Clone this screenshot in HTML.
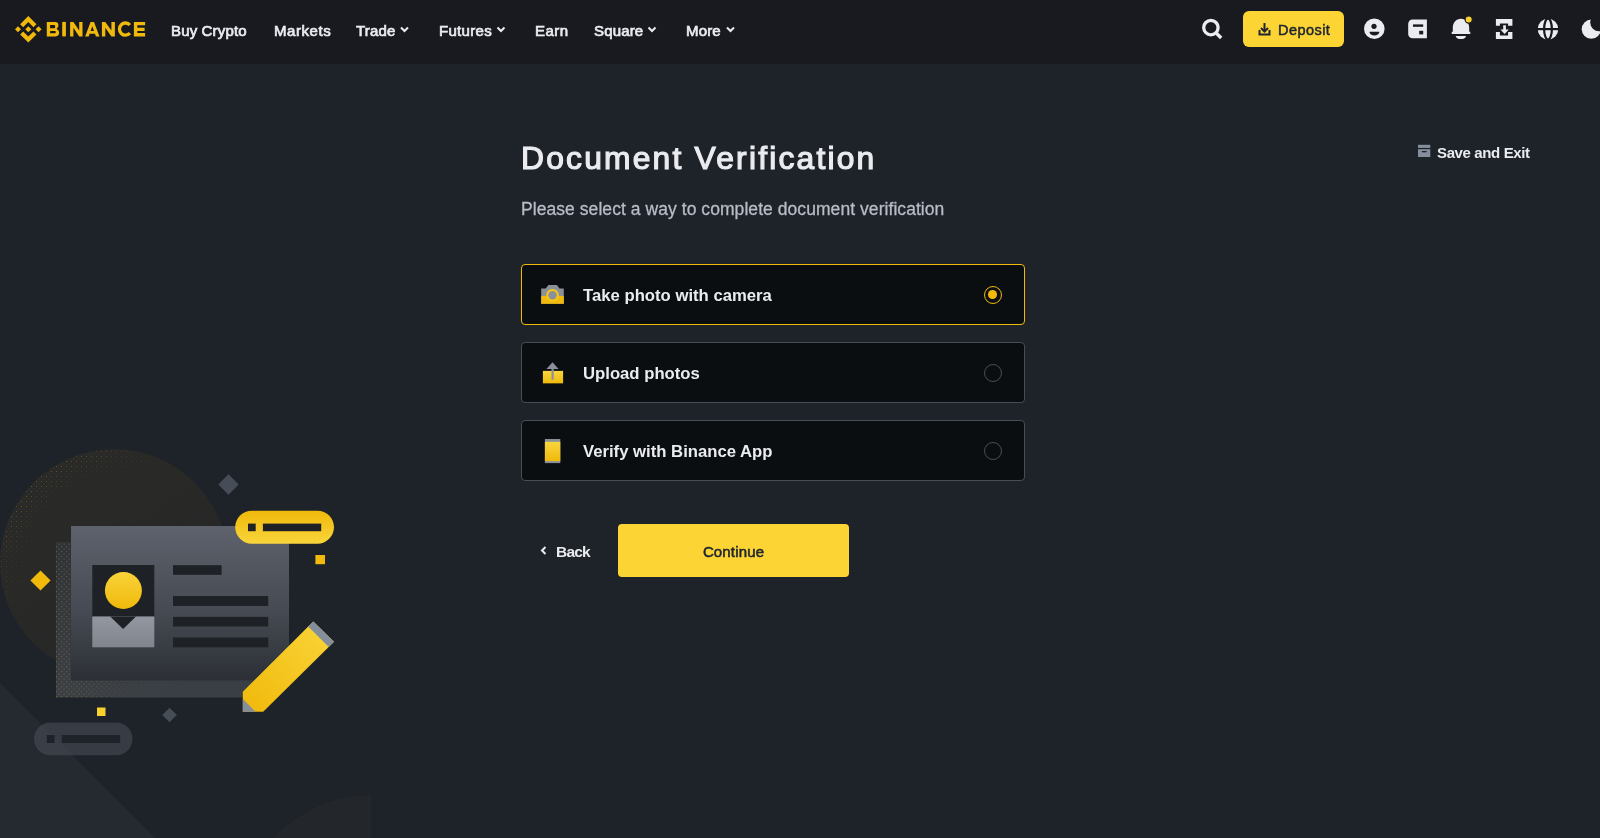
<!DOCTYPE html>
<html>
<head>
<meta charset="utf-8">
<style>
html,body{margin:0;padding:0;}
.abs,.nav,.ctext{will-change:transform;}
body{width:1600px;height:838px;overflow:hidden;background:#1E2229;font-family:"Liberation Sans",sans-serif;position:relative;}
.abs{position:absolute;white-space:nowrap;line-height:1;}
#hdr{position:absolute;left:0;top:0;width:1600px;height:64px;background:#181A20;}
.nav{position:absolute;top:22.9px;font-size:15px;font-weight:400;color:#EAECEF;-webkit-text-stroke:0.7px #EAECEF;letter-spacing:0.15px;line-height:1;white-space:nowrap;}
.card{position:absolute;left:521px;width:504px;height:61px;box-sizing:border-box;border:1px solid #474D57;border-radius:4px;background:#0B0E11;}
.card.sel{border-color:#F0B90B;}
.ctext{position:absolute;left:61.3px;top:22.8px;font-size:16.7px;font-weight:700;color:#EAECEF;line-height:1;white-space:nowrap;}
.radio{position:absolute;left:461.5px;top:20.5px;width:18px;height:18px;box-sizing:border-box;border:1.3px solid #474D57;border-radius:50%;}
.sel .radio{border-color:#F0B90B;}
.sel .radio:after{content:"";position:absolute;left:3.35px;top:3.35px;width:8.7px;height:8.7px;border-radius:50%;background:#F0B90B;}
svg{position:absolute;overflow:visible;}
</style>
</head>
<body>
<div id="hdr"></div>

<!-- logo -->
<svg style="left:15px;top:15.8px" width="26.6" height="26.6" viewBox="0 0 126.61 126.61"><g fill="#F0B90B"><path d="M38.73 53.2l24.59-24.58 24.6 24.6 14.3-14.31L63.32 0 24.42 38.9l14.31 14.3z"/><path d="M0 63.31l14.3-14.31 14.31 14.31-14.31 14.3z"/><path d="M38.73 73.41l24.59 24.59 24.6-24.6 14.31 14.29-38.9 38.91-38.91-38.88-.02-.02 14.33-14.29z"/><path d="M98 63.31l14.3-14.31 14.31 14.3-14.31 14.32z"/><path d="M77.83 63.3L63.32 48.78 52.59 59.51l-1.24 1.23-2.54 2.54-.02.02.02.03 14.51 14.5 14.51-14.52.01-.01-.01-.01z"/></g></svg>
<svg style="left:0;top:0" width="160" height="64"><g fill="#F0B90B" fill-rule="evenodd">
<path d="M46.8 21.9H55.3Q58.4 21.9 58.4 25.2Q58.4 27.6 56.6 28.9Q59.1 29.8 59.1 32.6Q59.1 36.4 55.6 36.4H46.8ZM50.1 25H54.4Q55.2 25 55.2 26.6Q55.2 28.2 54.4 28.2H50.1ZM50.1 31.1H54.9Q55.8 31.1 55.8 32.2Q55.8 33.3 54.9 33.3H50.1Z"/>
<path d="M62.2 21.9H65.9V36.4H62.2Z"/>
<path d="M70.1 21.9H73.4L79.2 30.6V21.9H82.5V36.4H79.2L73.4 27.7V36.4H70.1Z"/>
<path d="M85.1 36.4L90.6 21.9H94L99.5 36.4H95.9L95 33.8H89.6L88.7 36.4ZM90.6 30.9H94L92.3 26.2Z"/>
<path d="M101.9 21.9H105.3L111.4 30.6V21.9H114.9V36.4H111.4L105.3 27.7V36.4H101.9Z"/>
<path d="M133.9 21.9H145.1V25.2H137.3V27.75H144.6V30.9H137.3V33.1H145.1V36.4H133.9Z"/>
</g>
<path d="M129.9 25A6 6.1 0 1 0 129.9 33.2" fill="none" stroke="#F0B90B" stroke-width="3.3"/>
</svg>

<div class="nav" style="left:171px">Buy Crypto</div>
<div class="nav" style="left:273.5px;letter-spacing:0.55px">Markets</div>
<div class="nav" style="left:356px">Trade</div>
<div class="nav" style="left:438.5px;letter-spacing:0.3px">Futures</div>
<div class="nav" style="left:535px;letter-spacing:0.45px">Earn</div>
<div class="nav" style="left:594px">Square</div>
<div class="nav" style="left:685.5px">More</div>

<!-- chevrons -->
<svg style="left:0;top:0" width="1600" height="64">
<g fill="none" stroke="#EAECEF" stroke-width="2">
<path d="M401 27.5l3.5 3.5 3.5-3.5"/>
<path d="M497.5 27.5l3.5 3.5 3.5-3.5"/>
<path d="M648.5 27.5l3.5 3.5 3.5-3.5"/>
<path d="M727 27.5l3.5 3.5 3.5-3.5"/>
</g>
</svg>

<!-- search -->
<svg style="left:0;top:0" width="1600" height="64">
<g fill="none" stroke="#EAECEF" stroke-width="3.3">
<circle cx="1210.9" cy="27.6" r="7.2"/>
<path d="M1216.2 33l5 5"/>
</g>
</svg>

<!-- deposit -->
<div style="position:absolute;left:1243px;top:11px;width:101px;height:36px;border-radius:6px;background:#FCD535;"></div>
<svg style="left:0;top:0" width="1600" height="64">
<g fill="none" stroke="#202630" stroke-width="2">
<path d="M1264.5 23v8"/>
<path d="M1261 28l3.5 3.5 3.5-3.5"/>
<path d="M1259.5 30v4.5h10v-4.5"/>
</g>
</svg>
<div class="abs" style="left:1278px;top:23.2px;font-size:14.5px;font-weight:400;color:#202630;-webkit-text-stroke:0.5px #202630;letter-spacing:0.45px;">Deposit</div>

<!-- header right icons -->
<svg style="left:0;top:0" width="1600" height="64">
<g fill="#EAECEF">
<!-- user -->
<circle cx="1374.3" cy="28.8" r="10.3"/>
<!-- wallet -->
<path d="M1412.5 19.6h14.4v18.7h-14.4a4.3 4.3 0 0 1-4.3-4.3v-10.1a4.3 4.3 0 0 1 4.3-4.3z"/>
<!-- bell -->
<path d="M1461 18.8c-5 0-8.2 4-8.2 9v4h-1.1v2.2h18.6v-2.2h-1.1v-4c0-5-3.2-9-8.2-9z"/>
<path d="M1455.7 35.9h10.3c0 2-2.3 3.2-5.15 3.2s-5.15-1.2-5.15-3.2z"/>
<!-- transfer -->
<path d="M1495.9 19H1512.4V25.8H1508.1V23.5H1499.9V25.8H1495.9Z"/>
<path d="M1495.9 38.9H1512.4V32.1H1508.1V35.5H1499.9V32.1H1495.9Z"/>
<path d="M1503.2 25.3H1505.9V29.4H1508.8L1504.6 33.9L1500.4 29.4H1503.2Z"/>
<!-- globe -->
<circle cx="1548" cy="29.1" r="10.3"/>
<!-- moon -->
<circle cx="1591.3" cy="29.2" r="9.6"/>
</g>
<g fill="#181A20">
<circle cx="1374" cy="26.3" r="2.6"/>
<path d="M1369.6 31.8h9.6v0.5c0 1.8-2.2 3.2-4.8 3.2s-4.8-1.4-4.8-3.2z"/>
<rect x="1413" y="24.4" width="10.2" height="2.4"/>
<rect x="1419.2" y="30.8" width="4" height="3.6"/>
</g>
<g fill="none" stroke="#181A20" stroke-width="2.2">
<path d="M1537 29.1h22"/>
<ellipse cx="1548" cy="29.1" rx="3.9" ry="10.4"/>
</g>
<circle cx="1599.2" cy="22.3" r="9" fill="#181A20"/>
<circle cx="1468.7" cy="19.6" r="3.6" fill="#F8D12F" stroke="#181A20" stroke-width="1.2"/>
</svg>

<!-- main -->
<div class="abs" style="left:521px;top:142.8px;font-size:31.8px;font-weight:400;color:#EAECEF;-webkit-text-stroke:1.2px #EAECEF;letter-spacing:2.2px;">Document Verification</div>
<div class="abs" style="left:520.5px;top:200.6px;font-size:17.5px;font-weight:400;color:#B7BDC6;-webkit-text-stroke:0.3px #B7BDC6;letter-spacing:0.06px;">Please select a way to complete document verification</div>

<!-- save and exit -->
<svg style="left:0;top:130px" width="1600" height="40">
<g fill="#848E9C">
<rect x="1418" y="14.8" width="12.3" height="3.1"/>
<path d="M1418 19.2h12.3v7.8h-12.3z"/>
</g>
<rect x="1421.8" y="21" width="4.8" height="1.3" fill="#1E2229"/>
</svg>
<div class="abs" style="left:1436.5px;top:144.5px;font-size:15px;font-weight:700;color:#EAECEF;letter-spacing:-0.375px;">Save and Exit</div>

<!-- cards -->
<div class="card sel" style="top:264px">
  <svg style="left:-1px;top:-1px" width="60" height="61">
    <defs><linearGradient id="gIc" x1="0" y1="0" x2="0" y2="1"><stop offset="0" stop-color="#F9D53E"/><stop offset="1" stop-color="#F0B90B"/></linearGradient></defs>
    <path d="M20.2 24.6h4.5l2.8-3.6h8.4l2.6 3.6h4.3v15.2H20.2z" fill="#8A9099"/>
    <rect x="20.2" y="31.9" width="22.6" height="7.9" fill="#F0B90B"/>
    <circle cx="31.5" cy="31.3" r="6.3" fill="#F5C518"/>
    <circle cx="31.5" cy="31.3" r="4.2" fill="#8A9099"/>
  </svg>
  <div class="ctext">Take photo with camera</div>
  <div class="radio"></div>
</div>
<div class="card" style="top:342px">
  <svg style="left:-1px;top:-1px" width="60" height="61">
    <rect x="21.9" y="28.9" width="20.2" height="12.45" fill="url(#gIc)"/>
    <path d="M31.5 20.3l6.1 6.7h-4.9v10.7h-2.2v-10.7h-5.1z" fill="#8A9099"/>
  </svg>
  <div class="ctext">Upload photos</div>
  <div class="radio"></div>
</div>
<div class="card" style="top:420px">
  <svg style="left:-1px;top:-1px" width="60" height="61">
    <rect x="23.9" y="19" width="15.4" height="24.1" fill="#8A9099"/>
    <rect x="23.9" y="21.8" width="15.4" height="19.3" fill="url(#gIc)"/>
  </svg>
  <div class="ctext">Verify with Binance App</div>
  <div class="radio"></div>
</div>

<!-- back / continue -->
<svg style="left:0;top:540px" width="1600" height="20">
<path d="M545.5 7l-3.5 3.5 3.5 3.5" fill="none" stroke="#EAECEF" stroke-width="2"/>
</svg>
<div class="abs" style="left:556px;top:544.2px;font-size:15.5px;font-weight:700;color:#EAECEF;letter-spacing:-0.8px;">Back</div>
<div style="position:absolute;left:618px;top:524px;width:231px;height:53px;border-radius:4px;background:#FCD535;"></div>
<div class="abs" style="left:618px;width:231px;text-align:center;top:544.1px;font-size:15px;font-weight:400;color:#202630;-webkit-text-stroke:0.55px #202630;letter-spacing:0.15px;">Continue</div>

<!-- illustration -->
<svg style="left:0;top:0" width="1600" height="838">
<defs>
<linearGradient id="gFront" x1="0" y1="0" x2="0" y2="1">
<stop offset="0" stop-color="#5D626C"/><stop offset="0.55" stop-color="#464A52"/><stop offset="1" stop-color="#2C3036"/>
</linearGradient>
<linearGradient id="gBack" x1="0" y1="0" x2="0" y2="1">
<stop offset="0" stop-color="#2E3239"/><stop offset="1" stop-color="#3B3F46"/>
</linearGradient>
<linearGradient id="gY" x1="0" y1="0" x2="0" y2="1">
<stop offset="0" stop-color="#F8D33A"/><stop offset="1" stop-color="#F0B90B"/>
</linearGradient>
<linearGradient id="gYR" x1="0" y1="0" x2="0" y2="1">
<stop offset="0" stop-color="#F0B90B"/><stop offset="1" stop-color="#F9D53A"/>
</linearGradient>
<linearGradient id="gYP" x1="1" y1="0" x2="0" y2="1">
<stop offset="0" stop-color="#FAD53A"/><stop offset="1" stop-color="#F0B90B"/>
</linearGradient>
<linearGradient id="gPhoto" x1="0" y1="0" x2="0" y2="1">
<stop offset="0" stop-color="#9398A0"/><stop offset="1" stop-color="#80858D"/>
</linearGradient>
<linearGradient id="gCirc" x1="0.2" y1="0.1" x2="0.8" y2="0.9">
<stop offset="0.35" stop-color="#292927" stop-opacity="1"/><stop offset="1" stop-color="#292927" stop-opacity="0.6"/>
</linearGradient>
<pattern id="pDots" width="5" height="5" patternUnits="userSpaceOnUse">
<rect x="1" y="1" width="1" height="1" fill="#8C7330"/><rect x="3.5" y="3.5" width="1" height="1" fill="#4A4E55"/>
</pattern>
<pattern id="pDots2" width="5" height="5" patternUnits="userSpaceOnUse">
<rect x="1" y="1" width="1.2" height="1.2" fill="#9A7E2A"/><rect x="3.5" y="3.5" width="1.2" height="1.2" fill="#9A7E2A"/>
</pattern>
<linearGradient id="gStripMask" x1="0" y1="0" x2="1" y2="0">
<stop offset="0" stop-color="#fff" stop-opacity="0.7"/><stop offset="0.3" stop-color="#fff" stop-opacity="0.2"/><stop offset="0.6" stop-color="#fff" stop-opacity="0"/>
</linearGradient>
<mask id="mStrip"><rect x="56" y="542" width="218" height="156" fill="url(#gStripMask)"/></mask>
<radialGradient id="gRing" cx="114" cy="563" r="114" gradientUnits="userSpaceOnUse">
<stop offset="0.7" stop-color="#fff" stop-opacity="0"/><stop offset="1" stop-color="#fff" stop-opacity="0.85"/>
</radialGradient>
<linearGradient id="gDotMask" x1="0" y1="0" x2="0.7" y2="0.7">
<stop offset="0.15" stop-color="#fff" stop-opacity="1"/><stop offset="0.55" stop-color="#fff" stop-opacity="0"/>
</linearGradient>
<mask id="mDotsLin"><rect x="0" y="449" width="228" height="228" fill="url(#gDotMask)"/></mask>
<mask id="mDots"><g mask="url(#mDotsLin)"><circle cx="114" cy="563" r="113" fill="url(#gRing)"/></g></mask>
<clipPath id="cpBot"><rect x="0" y="0" width="371" height="838"/></clipPath>
</defs>
<!-- diagonal region -->
<path d="M0 683L155 838H0z" fill="#252930"/>
<!-- bottom circle -->
<circle cx="371" cy="926" r="131" fill="#23272B" clip-path="url(#cpBot)"/>
<!-- big circle -->
<circle cx="114" cy="563" r="114" fill="url(#gCirc)"/>
<rect x="0" y="449" width="228" height="228" fill="url(#pDots)" mask="url(#mDots)"/>
<!-- diamonds -->
<path d="M228.5 474.3l10.2 10.2-10.2 10.2-10.2-10.2z" fill="#474D57"/>
<path d="M40.5 570.4l10.1 10.1-10.1 10.1-10.1-10.1z" fill="#F0B90B"/>
<path d="M169.6 707.7l7.3 7.3-7.3 7.3-7.3-7.3z" fill="#474D57"/>
<!-- back card -->
<rect x="56" y="542" width="218" height="155.5" fill="url(#gBack)"/>
<rect x="56" y="542" width="218" height="155.5" fill="url(#pDots2)" mask="url(#mStrip)" opacity="0.8"/>
<!-- front card -->
<rect x="71" y="526" width="218" height="154.5" fill="url(#gFront)"/>
<!-- photo -->
<rect x="92.3" y="565" width="62" height="51.5" fill="#1E2126"/>
<rect x="92.3" y="616.5" width="62" height="30.8" fill="url(#gPhoto)"/>
<path d="M110.2 616.5h25.8l-12.9 12.5z" fill="#1E2126"/>
<circle cx="123.4" cy="590.5" r="18.5" fill="url(#gY)"/>
<!-- bars -->
<g fill="#1E2126">
<rect x="173" y="565.2" width="48.6" height="9.6"/>
<rect x="173" y="596" width="95.2" height="10"/>
<rect x="173" y="616.9" width="95.2" height="9.6"/>
<rect x="173" y="637.5" width="95.2" height="9.8"/>
</g>
<!-- yellow pill -->
<rect x="235.2" y="510.7" width="98.8" height="33" rx="16.5" fill="url(#gYR)"/>
<rect x="248" y="523.6" width="7.7" height="7.6" fill="#1E2126"/>
<rect x="262.9" y="523.6" width="58.3" height="7.6" fill="#1E2126"/>
<!-- small yellow squares -->
<rect x="315.4" y="555" width="9.6" height="9.2" fill="#F0B90B"/>
<rect x="97" y="707.5" width="8.5" height="8.5" fill="#F8D12F"/>
<!-- gray pill -->
<rect x="34" y="722.6" width="98.5" height="32.6" rx="16.3" fill="#474D57" fill-opacity="0.6"/>
<rect x="46.8" y="735" width="7.8" height="8" fill="#1E2229"/>
<rect x="61.8" y="735" width="58.3" height="8" fill="#1E2229"/>
<!-- pencil -->
<path d="M242.8 691.7L313.3 621.5L334 641.8L263.2 711.7H242.8z" fill="url(#gYP)"/>
<path d="M242.8 698.9V711.7H255.6z" fill="#848E9C"/>
<path d="M313.3 621.5L334 641.8L328.8 647L308.2 626.6z" fill="#848E9C"/>
</svg>
</body>
</html>
